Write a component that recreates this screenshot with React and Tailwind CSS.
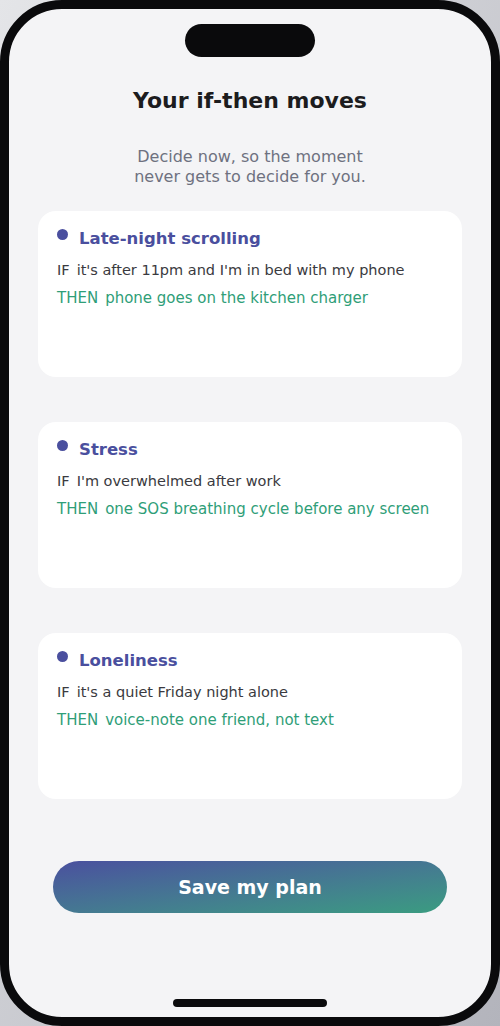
import React from "react";

const plans = [
  {
    title: "Late-night scrolling",
    when: "it's after 11pm and I'm in bed with my phone",
    then: "phone goes on the kitchen charger",
  },
  {
    title: "Stress",
    when: "I'm overwhelmed after work",
    then: "one SOS breathing cycle before any screen",
  },
  {
    title: "Loneliness",
    when: "it's a quiet Friday night alone",
    then: "voice-note one friend, not text",
  },
];

const PlanCard = ({ plan }) => (
  <div className="h-[166px] w-full rounded-[18px] bg-white pl-[19px] pr-4 pt-[14px]">
    <div className="flex items-start">
      <span className="mt-[4px] h-[11px] w-[11px] shrink-0 rounded-full bg-[#4a4f9e]"></span>
      <h2 className="ml-[11px] text-[16.5px] font-bold leading-[28px] text-[#4a4f9e]">
        {plan.title}
      </h2>
    </div>
    <p className="mt-[6px] text-[14.5px] leading-[22px] text-[#3a3a40]">
      <span className="mr-[7px]">IF</span>
      {plan.when}
    </p>
    <p className="mt-[6px] text-[15px] leading-[22px] text-[#2f9e78]">
      <span className="mr-[7px]">THEN</span>
      {plan.then}
    </p>
  </div>
);

export default function App() {
  return (
    <div
      className="h-[1026px] w-[500px] overflow-hidden bg-gradient-to-br from-[#e4e5e8] to-[#b3b4bc]"
      style={{ fontFamily: '"DejaVu Sans", "Open Sans", sans-serif' }}
    >
      <div className="h-full w-full rounded-[62px] border-[9px] border-[#0a0a0c] bg-[#f4f4f6]">
        <div className="flex h-full flex-col items-center rounded-[53px]">
          <div className="mt-[15px] h-[33px] w-[130px] rounded-full bg-[#0a0a0c]"></div>
          <h1 className="mt-[30px] text-[22px] font-bold leading-[28px] text-[#1c1c1e]">
            Your if-then moves
          </h1>
          <p className="mt-[32px] text-center text-[16px] leading-[20px] text-[#6e7180]">
            Decide now, so the moment
            <br />
            never gets to decide for you.
          </p>
          <div className="mt-[24px] flex w-full flex-col gap-[45px] px-[29px]">
            {plans.map((p) => (
              <PlanCard key={p.title} plan={p} />
            ))}
          </div>
          <button className="mt-[62px] h-[52px] w-[394px] rounded-full bg-gradient-to-br from-[#4a4f9e] to-[#3a9c80] text-[19px] font-bold text-white">
            Save my plan
          </button>
          <div className="flex-1"></div>
          <div className="mb-[10px] h-[8px] w-[154px] rounded-full bg-[#0a0a0c]"></div>
        </div>
      </div>
    </div>
  );
}
